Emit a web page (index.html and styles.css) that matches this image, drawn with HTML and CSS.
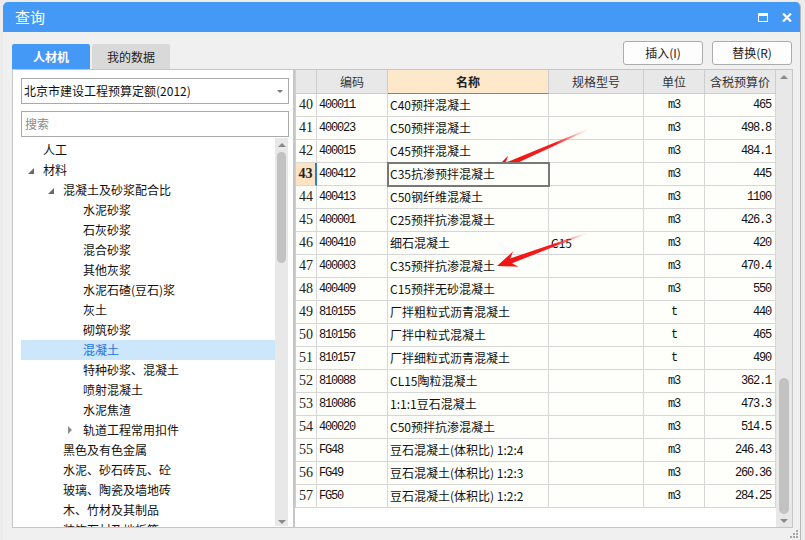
FILE: index.html
```html
<!DOCTYPE html>
<html lang="zh-CN">
<head>
<meta charset="utf-8">
<title>查询</title>
<link rel="stylesheet" href="styles.css">
</head>
<body>
<div class="screen">
  <div class="window">
    <div class="titlebar">
      <span class="title">查询</span>
      <span class="ctrl-max"></span>
      <svg class="ctrl-close" width="10" height="9" viewBox="0 0 10 9"><path d="M1 0.5 L9 8.5 M9 0.5 L1 8.5" stroke="#fff" stroke-width="2.2"/></svg>
    </div>
    <div class="toprow">
      <div class="tabs">
        <div class="tab active">人材机</div>
        <div class="tab">我的数据</div>
      </div>
      <div class="actions">
        <button class="btn">插入(I)</button>
        <button class="btn">替换(R)</button>
      </div>
    </div>
    <div class="main">
      <div class="leftpanel">
        <div class="select">北京市建设工程预算定额(2012)<span class="caret"></span></div>
        <div class="search">搜索</div>
        <div class="treewrap">
          <ul class="tree">
            <li class="node l1"><span class="tw"></span>人工</li>
            <li class="node l1"><span class="tw"><i class="open"></i></span>材料</li>
            <li class="node l2"><span class="tw"><i class="open"></i></span>混凝土及砂浆配合比</li>
            <li class="node l3"><span class="tw"></span>水泥砂浆</li>
            <li class="node l3"><span class="tw"></span>石灰砂浆</li>
            <li class="node l3"><span class="tw"></span>混合砂浆</li>
            <li class="node l3"><span class="tw"></span>其他灰浆</li>
            <li class="node l3"><span class="tw"></span>水泥石碴(豆石)浆</li>
            <li class="node l3"><span class="tw"></span>灰土</li>
            <li class="node l3"><span class="tw"></span>砌筑砂浆</li>
            <li class="node l3 selected"><span class="tw"></span>混凝土</li>
            <li class="node l3"><span class="tw"></span>特种砂浆、混凝土</li>
            <li class="node l3"><span class="tw"></span>喷射混凝土</li>
            <li class="node l3"><span class="tw"></span>水泥焦渣</li>
            <li class="node l3"><span class="tw"><i class="closed"></i></span>轨道工程常用扣件</li>
            <li class="node l2"><span class="tw"></span>黑色及有色金属</li>
            <li class="node l2"><span class="tw"></span>水泥、砂石砖瓦、砼</li>
            <li class="node l2"><span class="tw"></span>玻璃、陶瓷及墙地砖</li>
            <li class="node l2"><span class="tw"></span>木、竹材及其制品</li>
            <li class="node l2"><span class="tw"></span>装饰石材及地板等</li>
          </ul>
          <div class="vs vs-tree">
            <span class="up"></span>
            <span class="thumb"></span>
            <span class="fill"></span>
            <span class="down"></span>
          </div>
        </div>
      </div>
      <div class="gridpanel">
        <div class="grid">
          <div class="hc"></div><div class="hc">编码</div><div class="hc sorted">名称</div><div class="hc">规格型号</div><div class="hc">单位</div><div class="hc">含税预算价</div>

          <div class="rn">40</div><div class="c code">400011</div><div class="c name">C40预拌混凝土</div><div class="c"></div><div class="c unit">m3</div><div class="c price">465</div>
          <div class="rn">41</div><div class="c code">400023</div><div class="c name">C50预拌混凝土</div><div class="c"></div><div class="c unit">m3</div><div class="c price">498.8</div>
          <div class="rn">42</div><div class="c code">400015</div><div class="c name">C45预拌混凝土</div><div class="c"></div><div class="c unit">m3</div><div class="c price">484.1</div>
          <div class="rn cur">43</div><div class="c code">400412</div><div class="c name focus">C35抗渗预拌混凝土</div><div class="c"></div><div class="c unit">m3</div><div class="c price">445</div>
          <div class="rn">44</div><div class="c code">400413</div><div class="c name">C50钢纤维混凝土</div><div class="c"></div><div class="c unit">m3</div><div class="c price">1100</div>
          <div class="rn">45</div><div class="c code">400001</div><div class="c name">C25预拌抗渗混凝土</div><div class="c"></div><div class="c unit">m3</div><div class="c price">426.3</div>
          <div class="rn">46</div><div class="c code">400410</div><div class="c name">细石混凝土</div><div class="c spec">C15</div><div class="c unit">m3</div><div class="c price">420</div>
          <div class="rn">47</div><div class="c code">400003</div><div class="c name">C35预拌抗渗混凝土</div><div class="c"></div><div class="c unit">m3</div><div class="c price">470.4</div>
          <div class="rn">48</div><div class="c code">400409</div><div class="c name">C15预拌无砂混凝土</div><div class="c"></div><div class="c unit">m3</div><div class="c price">550</div>
          <div class="rn">49</div><div class="c code">810155</div><div class="c name">厂拌粗粒式沥青混凝土</div><div class="c"></div><div class="c unit">t</div><div class="c price">440</div>
          <div class="rn">50</div><div class="c code">810156</div><div class="c name">厂拌中粒式混凝土</div><div class="c"></div><div class="c unit">t</div><div class="c price">465</div>
          <div class="rn">51</div><div class="c code">810157</div><div class="c name">厂拌细粒式沥青混凝土</div><div class="c"></div><div class="c unit">t</div><div class="c price">490</div>
          <div class="rn">52</div><div class="c code">810088</div><div class="c name">CL15陶粒混凝土</div><div class="c"></div><div class="c unit">m3</div><div class="c price">362.1</div>
          <div class="rn">53</div><div class="c code">810086</div><div class="c name">1:1:1豆石混凝土</div><div class="c"></div><div class="c unit">m3</div><div class="c price">473.3</div>
          <div class="rn">54</div><div class="c code">400020</div><div class="c name">C50预拌抗渗混凝土</div><div class="c"></div><div class="c unit">m3</div><div class="c price">514.5</div>
          <div class="rn">55</div><div class="c code">FG48</div><div class="c name">豆石混凝土(体积比) 1:2:4</div><div class="c"></div><div class="c unit">m3</div><div class="c price">246.43</div>
          <div class="rn">56</div><div class="c code">FG49</div><div class="c name">豆石混凝土(体积比) 1:2:3</div><div class="c"></div><div class="c unit">m3</div><div class="c price">260.36</div>
          <div class="rn">57</div><div class="c code">FG50</div><div class="c name">豆石混凝土(体积比) 1:2:2</div><div class="c"></div><div class="c unit">m3</div><div class="c price">284.25</div>
        </div>
        <div class="vs vs-grid">
          <span class="up"></span>
          <span class="thumb"></span>
          <span class="fill"></span>
          <span class="down"></span>
        </div>
      </div>
    </div>
    <div class="bottom">
      <svg class="grip" width="9" height="9" viewBox="0 0 9 9">
        <rect x="7" y="1" width="2" height="2" fill="#a8a8a8"/>
        <rect x="4" y="4" width="2" height="2" fill="#a8a8a8"/>
        <rect x="7" y="4" width="2" height="2" fill="#a8a8a8"/>
        <rect x="1" y="7" width="2" height="2" fill="#a8a8a8"/>
        <rect x="4" y="7" width="2" height="2" fill="#a8a8a8"/>
        <rect x="7" y="7" width="2" height="2" fill="#a8a8a8"/>
      </svg>
    </div>
  </div>
  <svg class="arrows" width="805" height="540" viewBox="0 0 805 540">
    <defs>
      <linearGradient id="fade1" x1="0" y1="0" x2="105" y2="0" gradientUnits="userSpaceOnUse">
        <stop offset="0" stop-color="#f01212"/>
        <stop offset="0.65" stop-color="#f42020"/>
        <stop offset="1" stop-color="#ff6060" stop-opacity="0"/>
      </linearGradient>
      <linearGradient id="fade2" x1="0" y1="0" x2="96" y2="0" gradientUnits="userSpaceOnUse">
        <stop offset="0" stop-color="#f01212"/>
        <stop offset="0.65" stop-color="#f42020"/>
        <stop offset="1" stop-color="#ff6060" stop-opacity="0"/>
      </linearGradient>
    </defs>
    <g transform="translate(493 171) rotate(-23.6)">
      <path d="M0 0 L20 -8 L15 -2.6 L105 -0.6 L105 0.6 L15 2.6 L20 8 Z" fill="url(#fade1)"/>
    </g>
    <g transform="translate(497 266) rotate(-20.1)">
      <path d="M0 0 L20 -8 L15 -2.6 L96 -0.6 L96 0.6 L15 2.6 L20 8 Z" fill="url(#fade2)"/>
    </g>
  </svg>
</div>
</body>
</html>
```

FILE: styles.css
```css
* { box-sizing: border-box; }
html, body { margin: 0; padding: 0; }
body { background: #ececec; }

.screen {
  position: relative;
  width: 805px;
  height: 540px;
  overflow: hidden;
  background: #ececec;
  font-family: "Noto Sans CJK SC", "Noto Sans", sans-serif;
  font-size: 12px;
  color: #111;
}

.window {
  margin: 2px 0 0 3px;
  width: 798px;
  height: 538px;
  border-right: 1px solid #b7b7b7;
  background: #f0f0f0;
  border-radius: 5px 5px 0 0;
  overflow: hidden;
  display: flex;
  flex-direction: column;
}

/* title bar */
.titlebar {
  height: 30px;
  flex: none;
  background: #4499f7;
  display: flex;
  align-items: center;
  padding: 0 8px 0 12px;
  color: #fff;
}
.title {
  flex: 1;
  font-size: 15px;
  line-height: 30px;
}
.ctrl-max {
  width: 10px;
  height: 9px;
  border: 1.5px solid #fff;
  border-top-width: 3px;
  margin-right: 14px;
  margin-top: 1px;
}
.ctrl-close { display: block; margin-top: 1px; }

/* top row */
.toprow {
  height: 37px;
  flex: none;
  display: flex;
  justify-content: space-between;
  padding: 0 8px 0 9px;
}
.tabs {
  display: flex;
  gap: 2px;
  align-self: flex-end;
}
.tab {
  width: 78px;
  height: 25px;
  line-height: 25px;
  text-align: center;
  background: #d9d9d9;
  color: #222;
  border-radius: 2px 2px 0 0;
  font-size: 12px;
}
.tab.active {
  background: #4499f7;
  color: #fff;
  font-weight: bold;
}
.actions {
  display: flex;
  gap: 9px;
  padding-top: 9px;
}
.btn {
  width: 80px;
  height: 24px;
  border: 1px solid #acacac;
  border-radius: 3px;
  background: #fdfdfd;
  font-family: "Noto Sans CJK SC", "Noto Sans", sans-serif;
  font-size: 12px;
  color: #222;
  padding: 0;
  line-height: 22px;
}

/* main */
.main {
  height: 459px;
  flex: none;
  display: flex;
  padding-left: 9px;
}

.leftpanel {
  width: 282px;
  border: 1px solid #c6c6c6;
  background: #fff;
  display: flex;
  flex-direction: column;
}
.select {
  position: relative;
  margin: 8px 4px 0 8px;
  height: 26px;
  border: 1px solid #a9a9a9;
  line-height: 24px;
  padding-left: 2px;
  font-size: 12px;
  color: #111;
}
.caret {
  position: absolute;
  right: 5px;
  top: 11px;
  width: 0;
  height: 0;
  border-left: 3px solid transparent;
  border-right: 3px solid transparent;
  border-top: 3px solid #7a7a7a;
}
.search {
  margin: 7px 4px 0 8px;
  height: 26px;
  border: 1px solid #a9a9a9;
  line-height: 24px;
  padding-left: 3px;
  color: #8a8a8a;
  font-size: 12px;
}
.treewrap {
  flex: 1;
  min-height: 0;
  display: flex;
  margin-top: 1px;
}
.tree {
  list-style: none;
  margin: 0 0 0 8px;
  padding: 2px 0 0 0;
  width: 254px;
  overflow: hidden;
}
.node {
  height: 20px;
  line-height: 20px;
  display: flex;
  align-items: center;
  white-space: nowrap;
  font-size: 12px;
  color: #111;
}
.node.l1 { padding-left: 2px; }
.node.l2 { padding-left: 22px; }
.node.l3 { padding-left: 42px; }
.node.selected {
  background: #cce6fc;
  color: #1a72dc;
}
.tw {
  width: 20px;
  height: 20px;
  position: relative;
  flex: none;
}
.tw .open {
  position: absolute;
  left: 5px;
  top: 8px;
  width: 0;
  height: 0;
  border-style: solid;
  border-width: 0 0 6px 6px;
  border-color: transparent transparent #6a6a6a transparent;
}
.tw .closed {
  position: absolute;
  left: 5px;
  top: 6px;
  width: 0;
  height: 0;
  border-top: 4px solid transparent;
  border-bottom: 4px solid transparent;
  border-left: 4px solid #8c8c8c;
}

/* scrollbars */
.vs {
  background: #e8e8e8;
  display: flex;
  flex-direction: column;
  align-items: center;
  flex: none;
}
.vs .up {
  width: 0;
  height: 0;
  border-left: 4px solid transparent;
  border-right: 4px solid transparent;
  border-bottom: 4px solid #8a8a8a;
}
.vs .down {
  width: 0;
  height: 0;
  border-left: 4px solid transparent;
  border-right: 4px solid transparent;
  border-top: 4px solid #8a8a8a;
}
.vs .thumb {
  background: #c2c2c2;
  border-radius: 5px;
}
.vs .fill { flex: 1; }

.vs-tree {
  width: 13px;
  margin: 0 5px 1px 0;
}
.vs-tree .up { margin-top: 5px; }
.vs-tree .thumb { width: 9px; height: 111px; margin-top: 5px; }
.vs-tree .down { margin-bottom: 2px; }

.vs-grid {
  width: 16px;
  margin-left: 0;
}
.vs-grid .up { margin-top: 5px; }
.vs-grid .thumb { width: 10px; height: 136px; margin-top: 299px; }
.vs-grid .down { margin-bottom: 4px; }

/* grid */
.gridpanel {
  width: 499px;
  border: 1px solid #c6c6c6;
  background: #fff;
  display: flex;
  align-items: stretch;
}
.grid {
  width: 481px;
  align-self: flex-start;
  border-left: 1px solid #cfcfcf;
  display: grid;
  grid-template-columns: 21px 71px 161px 95px 61px 71px;
  grid-auto-rows: 23px;
  grid-template-rows: 24px;
}
.hc {
  background: #e8e8e8;
  border-right: 1px solid #cdcdcd;
  border-bottom: 1px solid #cdcdcd;
  text-align: center;
  line-height: 23px;
  font-size: 12px;
  color: #333;
}
.hc.sorted {
  background: #fde8cc;
  border-bottom: 1px solid #4a8fe0;
  font-weight: bold;
  color: #222;
}
.rn, .c {
  background: #fefefa;
  border-right: 1px solid #d6d6d6;
  border-bottom: 1px solid #d6d6d6;
  line-height: 22px;
  white-space: nowrap;
  overflow: hidden;
}
.rn {
  text-align: center;
  font-family: "Liberation Serif", serif;
  font-size: 14px;
  color: #222;
}
.rn.cur {
  background: #fde3c2;
  font-weight: bold;
  border-right: 2px solid #2a7de1;
}
.c {
  padding: 0 2px;
  font-size: 12px;
  color: #111;
}
.code, .unit, .price {
  font-family: "Liberation Mono", monospace;
  font-size: 12px;
  letter-spacing: -1.2px;
}
.unit { text-align: center; }
.price { text-align: right; padding-right: 4px; }
.name.focus {
  outline: 2px solid #787878;
  outline-offset: -1px;
  position: relative;
  z-index: 1;
}

/* bottom */
.bottom {
  flex: 1;
  display: flex;
  justify-content: flex-end;
  align-items: flex-end;
  padding: 0 2px 2px 0;
}
.grip { display: block; }

.arrows {
  position: absolute;
  left: 0;
  top: 0;
  pointer-events: none;
}
```
